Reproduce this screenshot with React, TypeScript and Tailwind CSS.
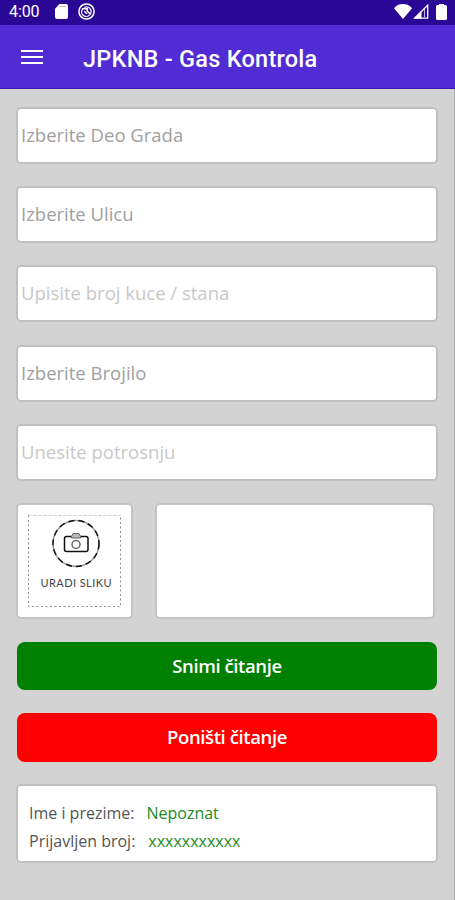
import { clsx } from "clsx"
import { useState } from "react"

const fields = [
  { name: "area", placeholder: "Izberite Deo Grada", muted: false },
  { name: "street", placeholder: "Izberite Ulicu", muted: false },
  { name: "house", placeholder: "Upisite broj kuce / stana", muted: true },
  { name: "meter", placeholder: "Izberite Brojilo", muted: false },
  { name: "usage", placeholder: "Unesite potrosnju", muted: true },
]

const StatusBar = () => (
  <div className="flex h-[25px] items-center bg-[#290895] pr-[8px] pb-[2px] pl-[9px] text-white">
    <span className="w-[46px] font-['Roboto',sans-serif] text-[16px] leading-none tracking-[-0.1px]">
      4:00
    </span>
    <svg className="h-[15px] w-[13px]" viewBox="0 0 13 15" fill="currentColor">
      <path d="M4.5 0H11a2 2 0 0 1 2 2v11a2 2 0 0 1-2 2H2a2 2 0 0 1-2-2V4.7Z" />
      <path d="M4.500 2.500H10.500" stroke="#b9add9" strokeWidth="1" />
    </svg>
    <svg className="ml-[10px] h-[17px] w-[17px]" viewBox="0 0 17 17" fill="none" stroke="currentColor">
      <circle cx="8.500" cy="8.500" r="7.600" strokeWidth="1.500" />
      <path d="M4.700 6A4.500 4.500 0 0 0 11.500 11.900M6.300 4.400A4.600 4.600 0 0 1 12.600 10.400" strokeWidth="1.300" />
      <path d="M4 5.800H9.200V8L12.800 11.800M6.200 8.200 9 10.800" strokeWidth="1.500" />
    </svg>
    <div className="ml-auto flex items-center">
      <svg className="h-[15px] w-[18px]" viewBox="0 0 18 15" fill="currentColor">
        <path d="M9 15 0 4.200C2 1.500 5.200 0 9 0s7 1.500 9 4.200Z" />
      </svg>
      <svg className="ml-px h-[15px] w-[16px]" viewBox="0 0 16 15" fill="none" stroke="currentColor">
        <path d="M1.700 14.200H14.700V1.200Z" strokeWidth="1.300" />
        <path d="M1 14.500 8.500 7V14.500Z" fill="currentColor" stroke="none" />
        <path d="M11.500 5V13" strokeWidth="1" opacity="0.700" />
      </svg>
      <svg className="ml-[7px] h-[16px] w-[11px]" viewBox="0 0 11 16" fill="currentColor">
        <path d="M3 0h5v1H9.500A1.500 1.500 0 0 1 11 2.500v12A1.500 1.500 0 0 1 9.500 16h-8A1.500 1.500 0 0 1 0 14.500v-12a1.500 1.500 0 0 1 1.500-1.500H3Z" />
      </svg>
    </div>
  </div>
)

const AppBar = () => (
  <header className="flex h-[64px] items-center border-b border-[#3d17b8] bg-[#512bd4] pl-[21px] text-white">
    <button aria-label="Menu" className="flex w-[22px] flex-col gap-[4px]">
      <span className="h-[2px] bg-white" />
      <span className="h-[2px] bg-white" />
      <span className="h-[2px] bg-white" />
    </button>
    <h1 className="ml-[40px] pt-[4px] font-['Roboto',sans-serif] text-[23.500px] leading-[30px] font-medium tracking-[0.250px] whitespace-nowrap">
      JPKNB - Gas Kontrola
    </h1>
  </header>
)

const PhotoButton = () => (
  <button className="h-[116px] w-[117px] rounded-[5px] border-2 border-[#c4c4c4] bg-white p-[10px]">
    <svg className="h-[92px] w-[93px]" viewBox="0 0 93 92" fill="none" stroke="#111">
      <path d="M.5 .5H92.500" stroke="#ccc" strokeDasharray="3 2" />
      <path d="M.5 .5V91.500H92.500V.5" stroke="#8c8c8c" strokeDasharray="2 2.500" />
      <circle cx="48" cy="28.500" r="23" stroke="#999" strokeWidth="1.500" />
      <circle cx="48" cy="28.500" r="23" strokeWidth="1.500" strokeDasharray="6 4" />
      <rect x="36.500" y="21.500" width="23.500" height="15" rx="2" strokeWidth="1.500" />
      <path d="M43.500 21.500 45 18.500h6l1.500 3v1.500h-9Z" stroke="#666" fill="#bbb" />
      <circle cx="48" cy="29.500" r="4" stroke="#666" strokeWidth="1.500" />
      <text
        x="48"
        y="72"
        textAnchor="middle"
        textLength="71"
        className="fill-[#444] stroke-none font-['Lato',sans-serif] text-[11px]"
      >
        URADI SLIKU
      </text>
    </svg>
  </button>
)

const App = () => {
  const [values, setValues] = useState<Record<string, string>>({})

  return (
    <div className="h-[900px] w-[455px] overflow-hidden bg-[#d3d3d3] font-['Open_Sans',sans-serif]">
      <StatusBar />
      <AppBar />
      <main className="h-[811px] border-r border-[#aaa] pt-[18px] pr-[16px] pl-[16px]">
        <div className="flex flex-col gap-[22.200px]">
          {fields.map((field) => (
            <input
              key={field.name}
              value={values[field.name] ?? ""}
              onChange={(e) =>
                setValues({ ...values, [field.name]: e.target.value })
              }
              placeholder={field.placeholder}
              className={clsx(
                "h-[57px] w-[422px] rounded-[5px] border-2 border-[#c0c0c0] bg-white pb-[2px] pl-[3px] text-[18.500px] text-[#555] outline-none",
                field.muted
                  ? "placeholder:text-[#c8c8c8]"
                  : "placeholder:text-[#a0a0a0]"
              )}
            />
          ))}
        </div>

        <div className="mt-[22px] flex gap-[22px]">
          <PhotoButton />
          <div className="h-[116px] w-[280px] rounded-[5px] border-2 border-[#c4c4c4] bg-white" />
        </div>

        <div className="mt-[23px] ml-px flex w-[420px] flex-col gap-[23px]">
          <button className="h-[48px] rounded-[8px] bg-[#008000] text-[18.500px] font-semibold tracking-[-0.400px] text-white">
            Snimi čitanje
          </button>
          <button className="h-[49px] rounded-[8px] bg-[#ff0000] text-[18.500px] font-semibold tracking-[-0.400px] text-white">
            Poništi čitanje
          </button>
        </div>

        <div className="mt-[22px] flex h-[79px] w-[422px] flex-col rounded-[5px] border-2 border-[#c0c0c0] bg-white pt-[13px] pl-[11px] text-[16px] leading-[28px] text-[#555]">
          <p className="flex gap-[12px]">
            Ime i prezime: <span className="text-[#228b22]">Nepoznat</span>
          </p>
          <p className="flex gap-[13px]">
            Prijavljen broj: <span className="text-[#228b22]">xxxxxxxxxxx</span>
          </p>
        </div>
      </main>
    </div>
  )
}

export default App
